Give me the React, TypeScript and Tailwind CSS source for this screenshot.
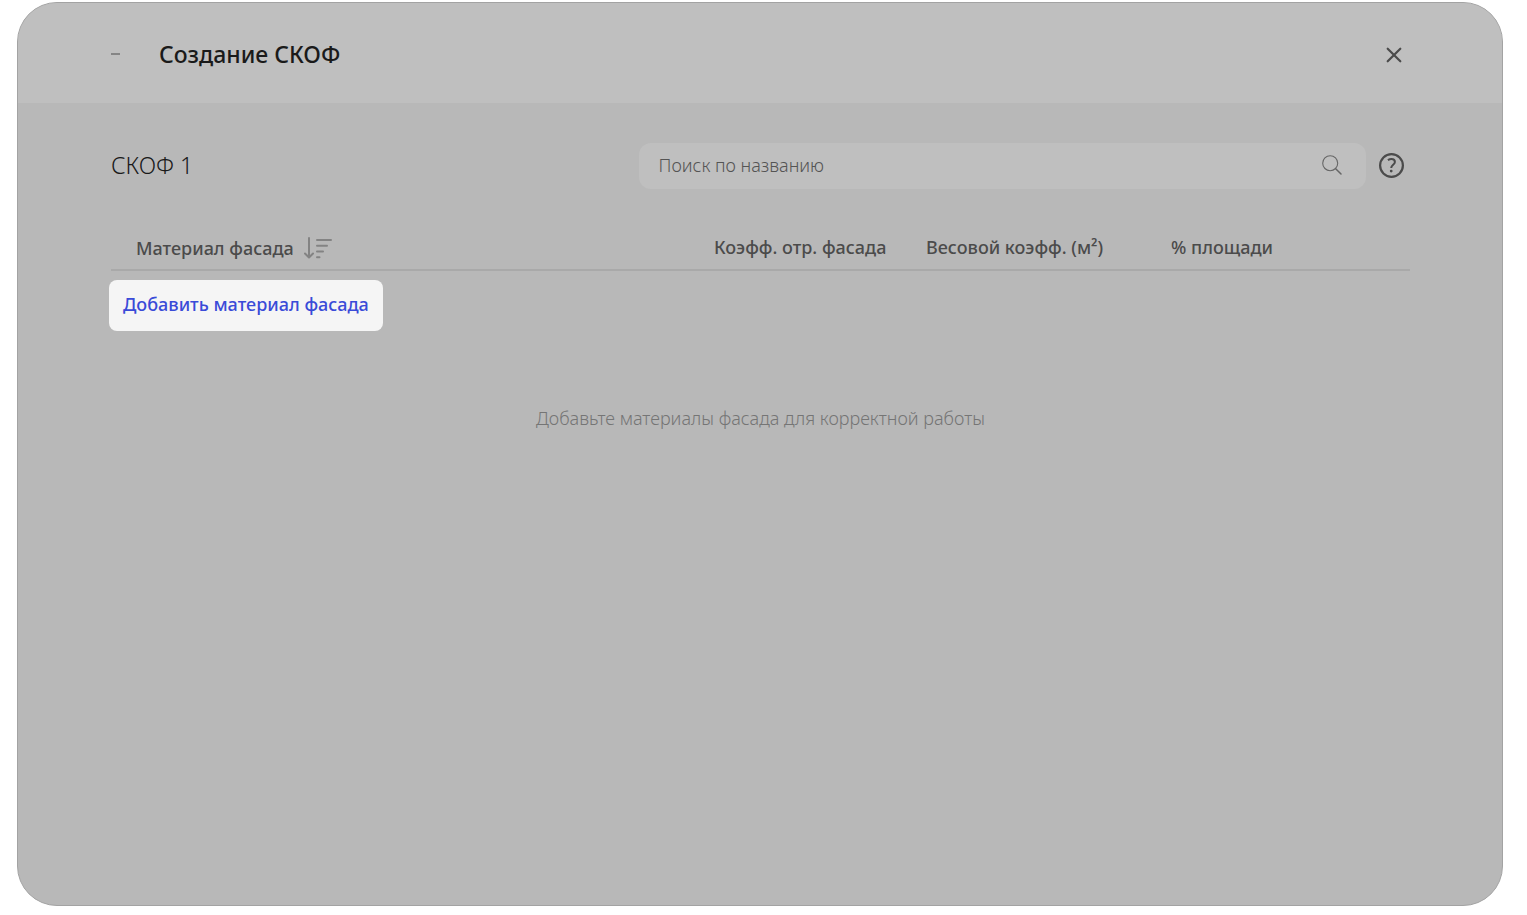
import React, { useState } from 'react';

const columns = [
    { name: 'Коэфф. отр. фасада', width: 'w-[212px]' },
    { name: 'Весовой коэфф. (м²)', width: 'w-[245px]' },
    { name: '% площади', width: 'w-[239px]' },
];

const SortIcon: React.FC = () => (
    <svg width="28" height="24" viewBox="0 0 28 24" fill="none" stroke="#838383" strokeWidth="2" strokeLinecap="round" strokeLinejoin="round" aria-hidden="true">
        <path d="M5 2V21M1 17.5L5 21.5L9 17.5" />
        <path d="M13 4H27M13 9.7H23M13 15.5H19M13 21.2H15.5" />
    </svg>
);

const SearchIcon: React.FC = () => (
    <svg width="20" height="20" viewBox="0 0 20 20" fill="none" stroke="#666666" strokeLinecap="round" aria-hidden="true">
        <circle cx="8.2" cy="8.2" r="7.5" strokeWidth="1.1" />
        <path d="M13.7 13.7L19 19" strokeWidth="1.5" />
    </svg>
);

const HelpIcon: React.FC = () => (
    <svg width="26" height="26" viewBox="0 0 26 26" fill="none" stroke="#4b4b4b" strokeWidth="2.2" aria-hidden="true">
        <circle cx="12.5" cy="12.5" r="11.4" />
        <path d="M8.9 7.2C10.1 6.4 11.1 6 12.4 6C14.6 6 15.9 7.1 15.9 8.9C15.9 11.7 12.2 11.7 12.2 14.9" strokeWidth="2" />
        <circle cx="12.2" cy="18.1" r="1.4" fill="#4b4b4b" stroke="none" />
    </svg>
);

const CloseIcon: React.FC = () => (
    <svg width="16" height="16" viewBox="0 0 16 16" fill="none" stroke="#4b4b4b" strokeWidth="2.2" strokeLinecap="round" aria-hidden="true">
        <path d="M1.7 1.7L14.3 14.3M14.3 1.7L1.7 14.3" />
    </svg>
);

const App: React.FC = () => {
    const [query, setQuery] = useState('');

    return (
        <div className="flex min-h-screen bg-white pt-[2px] pr-6 pb-[9px] pl-[17px] font-['Noto_Sans',sans-serif] text-lg text-[#4b4b4b]">
            <main className="flex min-w-0 flex-1 flex-col overflow-hidden rounded-[40px] border border-[#a3a3a3] bg-[#b8b8b8]">
                <header className="flex h-[100px] items-center bg-[#bfbfbf] pt-[3px] pr-[92px] pl-[93px]">
                    <button aria-label="Свернуть" className="flex h-6 w-12 items-center pb-[2px]">
                        <span className="h-[2px] w-[9px] bg-[#858585]" />
                    </button>
                    <h1 className="flex-1 text-[23px] font-medium text-[#1a1a1a]">Создание СКОФ</h1>
                    <button aria-label="Закрыть" className="mr-2">
                        <CloseIcon />
                    </button>
                </header>

                <section className="flex flex-1 flex-col pt-10 pr-[92px] pl-[93px]">
                    <div className="flex items-center">
                        <h2 className="flex-1 text-[23px] font-[350] text-[#1a1a1a]">СКОФ 1</h2>
                        <label className="flex h-[46px] w-[56%] items-center rounded-xl bg-[#bfbfbf] pr-6 pb-[2px] pl-5">
                            <input
                                type="text"
                                aria-label="Поиск по названию"
                                placeholder="Поиск по названию"
                                value={query}
                                onChange={(e) => setQuery(e.target.value)}
                                className="min-w-0 flex-1 bg-transparent font-[350] outline-none placeholder:text-[#545454]"
                            />
                            <SearchIcon />
                        </label>
                        <button aria-label="Помощь" className="mr-[5px] ml-[13px]">
                            <HelpIcon />
                        </button>
                    </div>

                    <table className="mt-[35px] w-full table-fixed border-collapse text-left">
                        <thead>
                            <tr className="h-[46px] border-b-2 border-[#a9a9a9]">
                                <th className="pt-[2px] pl-[25px] font-medium">
                                    <button className="flex items-center gap-[10px]">
                                        Материал фасада
                                        <SortIcon />
                                    </button>
                                </th>
                                {columns.map((col) => (
                                    <th key={col.name} className={`${col.width} font-medium`}>{col.name}</th>
                                ))}
                            </tr>
                        </thead>
                    </table>

                    <button className="-ml-[2px] mt-[9px] h-[51px] self-start rounded-lg bg-[#f5f5f5] px-[14px] pb-[3px] font-medium text-[#3a4bd8]">
                        Добавить материал фасада
                    </button>

                    <p className="mt-[73px] text-center font-[350] text-[#757575]">Добавьте материалы фасада для корректной работы</p>
                </section>
            </main>
        </div>
    );
};

export default App;
